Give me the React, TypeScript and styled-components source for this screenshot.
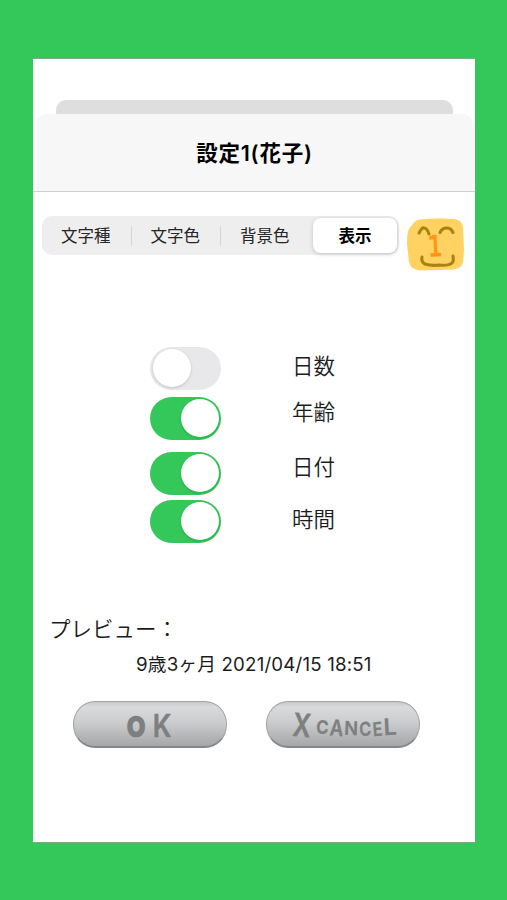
import React from "react";
import styled, { createGlobalStyle } from "styled-components";

const GlobalStyle = createGlobalStyle`
  * { box-sizing: border-box; }
  body {
    margin: 0;
    background: #34c759;
    font-family: Inter, "Noto Sans CJK JP", sans-serif;
    color: #1c1c1e;
  }
`;

const Page = styled.main`
  width: 507px;
  height: 900px;
  padding: 58px 32px 57px 33px;
  background: #34c759;
  overflow: hidden;
`;

const Screen = styled.section`
  height: 785px;
  background: #fff;
  border-top: 1px solid #7fa88b;
  border-bottom: 1px solid #7fa88b;
  display: flex;
  flex-direction: column;
`;

const SheetBehind = styled.div`
  height: 14px;
  margin: 41px 22px 0 23px;
  background: #dedede;
  border-radius: 10px 10px 0 0;
`;

const HeaderRule = styled.div`
  border-bottom: 1px solid #d0d0d0;
`;

const Header = styled.header`
  height: 77px;
  margin: 0 2px 0 3px;
  background: #f7f7f7;
  border-radius: 10px 10px 0 0;
  display: flex;
  align-items: center;
  justify-content: center;
`;

const Title = styled.h1`
  margin: 0;
  color: #000;
  font-size: 21.5px;
  font-weight: 600;
  line-height: 28px;
  letter-spacing: 0.8px;
  white-space: nowrap;
`;

const TabBar = styled.nav`
  display: flex;
  align-items: flex-start;
  gap: 7px;
  margin: 24px 0 0 9px;
`;

const Segments = styled.div`
  width: 357px;
  height: 39px;
  padding: 2px 2px 2px 0;
  display: flex;
  align-items: center;
  background: #eee;
  border-radius: 10px;
`;

const Segment = styled.button<{ $active?: boolean; $divider?: boolean }>`
  position: relative;
  flex: ${(p) => (p.$active ? "0 0 84px" : "0 0 89.5px")};
  height: 35px;
  margin: 0 0 0 ${(p) => (p.$active ? "auto" : "0")};
  padding: ${(p) => (p.$active ? "0" : "0 2px 0 0")};
  border: 0;
  border-radius: 8px;
  background: ${(p) => (p.$active ? "#fff" : "transparent")};
  box-shadow: ${(p) => (p.$active ? "0 1px 4px rgba(0,0,0,.19)" : "none")};
  color: ${(p) => (p.$active ? "#000" : "#252525")};
  font: ${(p) => (p.$active ? 700 : 400)} 16.5px/24px Inter, "Noto Sans CJK JP", sans-serif;

  &::after {
    content: "";
    display: ${(p) => (p.$divider ? "block" : "none")};
    position: absolute;
    right: 0;
    top: 8px;
    width: 1px;
    height: 20px;
    background: #d6d6d8;
  }
`;

const FaceIcon = styled.svg`
  width: 60px;
  height: 56px;
  flex: none;
`;

const Options = styled.div`
  height: 196px;
  margin: 75px 0 0 117px;
  display: flex;
  gap: 71px;
`;

const Column = styled.div`
  display: flex;
  flex-direction: column;
`;

const Switch = styled.button<{ $on: boolean; $space: number }>`
  width: 71px;
  height: 43px;
  margin: ${(p) => p.$space}px 0 0;
  padding: 2px 2px 3px 3px;
  border: 0;
  border-radius: 22px;
  display: flex;
  justify-content: ${(p) => (p.$on ? "flex-end" : "flex-start")};
  align-items: center;
  background: ${(p) => (p.$on ? "#34c759" : "#e8e8ea")};
`;

const Knob = styled.span`
  width: 38px;
  height: 38px;
  border-radius: 50%;
  background: #fff;
  box-shadow: 0 1px 3px rgba(0, 0, 0, 0.16);
`;

const OptionLabel = styled.span<{ $space: number }>`
  height: 30px;
  margin-top: ${(p) => p.$space}px;
  font-size: 21.5px;
  font-weight: 350;
  line-height: 30px;
`;

const PreviewHeading = styled.h2`
  margin: 71px 0 0 16px;
  font-size: 21.5px;
  font-weight: 350;
  line-height: 30px;
`;

const PreviewText = styled.p`
  margin: 8px 0 0 103px;
  font-size: 18.7px;
  line-height: 26px;
  letter-spacing: 0.18px;
  white-space: nowrap;
`;

const Actions = styled.div`
  display: flex;
  gap: 39px;
  margin: 23px 0 0 40px;
`;

const ActionButton = styled.button`
  width: 154px;
  height: 47px;
  padding: 0;
  border: 1.5px solid #a2a3a5;
  border-bottom: 2px solid #858688;
  border-radius: 22px / 23px;
  background: linear-gradient(#c9cacb 0%, #d9dadb 12%, #cccdce 45%, #b7b8b9 75%, #a6a7a8 100%);
`;

const Lettering = styled.svg`
  display: block;
  width: 152px;
  height: 43px;
  font-family: Inter, sans-serif;
  fill: #7e7f80;
  stroke: #7e7f80;
  stroke-linejoin: round;
`;

type Letter = { char: string; x: number; y: number; size: number; turn: number; weight: number; stretch: number };

const okLetters: Letter[] = [
  { char: "O", x: 62, y: 32.5, size: 25, turn: 0, weight: 2.6, stretch: 0.92 },
  { char: "K", x: 88, y: 33.5, size: 31, turn: 0, weight: 0.5, stretch: 0.85 },
];

const cancelLetters: Letter[] = [
  { char: "X", x: 34, y: 33.5, size: 32, turn: 5, weight: 0.5, stretch: 0.78 },
  { char: "C", x: 55, y: 30.5, size: 18, turn: 3, weight: 0.5, stretch: 0.92 },
  { char: "A", x: 69, y: 32.7, size: 22, turn: 4, weight: 0.3, stretch: 0.85 },
  { char: "N", x: 84, y: 32, size: 19, turn: 2, weight: 0.3, stretch: 0.96 },
  { char: "C", x: 98.5, y: 32.7, size: 19, turn: -2, weight: 0.3, stretch: 0.85 },
  { char: "E", x: 111, y: 32.7, size: 19, turn: -5, weight: 0.3, stretch: 0.85 },
  { char: "L", x: 123.5, y: 32, size: 23, turn: -3, weight: 0.3, stretch: 1 },
];

const HandLettering = ({ letters }: { letters: Letter[] }) => (
  <Lettering viewBox="0 0 152 43">
    {letters.map((l, i) => (
      <text
        key={i}
        textAnchor="middle"
        fontSize={l.size}
        fontWeight={600}
        strokeWidth={l.weight}
        transform={`translate(${l.x} ${l.y}) rotate(${l.turn}) scale(${l.stretch} 1)`}
      >
        {l.char}
      </text>
    ))}
  </Lettering>
);

const Face = () => (
  <FaceIcon viewBox="0 0 60 56">
    <path
      d="M14 3.5Q33 2 48 3Q56 4 57 11L58 34L57 46Q56 52 48 53.5L14 54.5Q5 54 3 46L1 28Q1 18 2.5 14Q4 11 7 8Q9 4 14 3.5Z"
      fill="#ffd262"
    />
    <g fill="none" stroke="#a98311" strokeWidth="3.1" strokeLinecap="round" strokeLinejoin="round">
      <path d="M13 17Q16 11 18 12Q21 12 23 18" />
      <path d="M34 16.5Q36 12 41 12Q45 12 47 16.5" />
      <path d="M16 41Q15 46 19 48Q25 50 33 49Q43 50 46 47Q48 45 47 40" />
    </g>
    <text
      transform="translate(29.5 40) rotate(-3) scale(0.8 1)"
      textAnchor="middle"
      fontFamily="DejaVu Sans"
      fontSize="28"
      fill="#ff9416"
      stroke="#ff9416"
      strokeWidth="1.2"
    >
      1
    </text>
  </FaceIcon>
);

const options = [
  { label: "日数", on: false, switchSpace: 0, labelSpace: 4 },
  { label: "年齢", on: true, switchSpace: 7, labelSpace: 16 },
  { label: "日付", on: true, switchSpace: 12, labelSpace: 25 },
  { label: "時間", on: true, switchSpace: 5, labelSpace: 22 },
];

export default function App() {
  return (
    <>
      <GlobalStyle />
      <Page>
        <Screen>
          <SheetBehind />
          <HeaderRule>
            <Header>
              <Title>設定1(花子)</Title>
            </Header>
          </HeaderRule>
          <TabBar>
            <Segments>
              <Segment $divider>文字種</Segment>
              <Segment $divider>文字色</Segment>
              <Segment>背景色</Segment>
              <Segment $active>表示</Segment>
            </Segments>
            <Face />
          </TabBar>
          <Options>
            <Column>
              {options.map((o) => (
                <Switch key={o.label} $on={o.on} $space={o.switchSpace} role="switch" aria-checked={o.on} aria-label={o.label}>
                  <Knob />
                </Switch>
              ))}
            </Column>
            <Column>
              {options.map((o) => (
                <OptionLabel key={o.label} $space={o.labelSpace}>
                  {o.label}
                </OptionLabel>
              ))}
            </Column>
          </Options>
          <PreviewHeading>プレビュー：</PreviewHeading>
          <PreviewText>9歳3ヶ月 2021/04/15 18:51</PreviewText>
          <Actions>
            <ActionButton>
              <HandLettering letters={okLetters} />
            </ActionButton>
            <ActionButton>
              <HandLettering letters={cancelLetters} />
            </ActionButton>
          </Actions>
        </Screen>
      </Page>
    </>
  );
}
